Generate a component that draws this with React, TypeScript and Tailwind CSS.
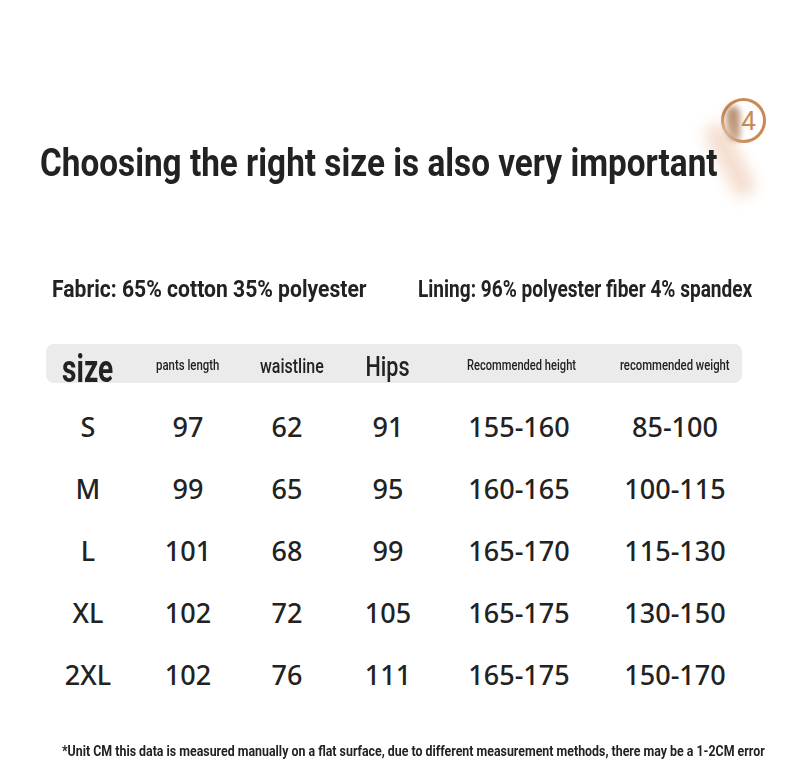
import { useLayoutEffect, useRef, useState } from 'react';

const roboto = { fontFamily: 'Roboto, "Liberation Sans", sans-serif' };

// squeezes a line of Roboto into the width it takes in the picture (the original uses a condensed face)
function Fit({ w, className = '', origin = 'left', children }: { w: number; className?: string; origin?: string; children: React.ReactNode }) {
  const ref = useRef<HTMLSpanElement>(null);
  const [s, setS] = useState(1);
  useLayoutEffect(() => {
    const measure = () => {
      if (ref.current) setS(w / ref.current.offsetWidth);
    };
    measure();
    document.fonts?.ready.then(measure);
  }, [w]);
  return (
    <span
      ref={ref}
      className={`inline-block whitespace-nowrap ${className}`}
      style={{ ...roboto, transform: `scaleX(${s})`, transformOrigin: origin }}
    >
      {children}
    </span>
  );
}

const rows = [
  ['S', '97', '62', '91', '155-160', '85-100'],
  ['M', '99', '65', '95', '160-165', '100-115'],
  ['L', '101', '68', '99', '165-170', '115-130'],
  ['XL', '102', '72', '105', '165-175', '130-150'],
  ['2XL', '102', '76', '111', '165-175', '150-170'],
];

const cols = 'grid grid-cols-[84px_116px_82px_120px_142px_170px]';

export default function App() {
  return (
    <div className="w-[790px] h-[775px] bg-white text-[#222] relative overflow-hidden">
      {/* page number badge with the blurred hand over it */}
      <div className="absolute left-[721px] top-[98px] w-[45px] h-[45px] rounded-full border-[3px] border-[#c98a55] flex items-center justify-center">
        <span className="text-[#c98a55] text-[26px] leading-none pl-[10px]" style={roboto}>4</span>
      </div>
      <div className="absolute left-[726px] top-[106px] w-[14px] h-[36px] rounded-full bg-[#a0663e] blur-[3px] opacity-70" />
      <div className="absolute left-[718px] top-[120px] w-[24px] h-[80px] rotate-[-28deg] rounded-full bg-[#f3dccb] blur-[7px] opacity-90" />

      <div className="pt-[140px] pl-[40px] h-[186px]">
        <Fit w={678} className="text-[39px] leading-[46px] font-bold">
          Choosing the right size is also very important
        </Fit>
      </div>

      <div className="flex mt-[89px] pl-[52px] h-[30px] items-center">
        <div className="w-[366px] shrink-0">
          <Fit w={315} className="text-[23px] leading-[30px] font-bold">Fabric: 65% cotton 35% polyester</Fit>
        </div>
        <div className="shrink-0">
          <Fit w={334} className="text-[23px] leading-[30px] font-bold">Lining: 96% polyester fiber 4% spandex</Fit>
        </div>
      </div>

      <div className={`${cols} items-center ml-[46px] mt-[39px] w-[696px] h-[39px] rounded-[8px] bg-[#ebebeb] font-bold`}>
        <div className="text-center translate-y-[5px]">
          <Fit w={51} origin="center" className="text-[38px] leading-none">size</Fit>
        </div>
        <div className="text-center">
          <Fit w={63} origin="center" className="text-[15px] leading-none font-medium">pants length</Fit>
        </div>
        <div className="text-center translate-y-[3px] pl-[6px]">
          <Fit w={64} origin="center" className="text-[20px] leading-none font-medium">waistline</Fit>
        </div>
        <div className="text-center translate-y-[4px]">
          <Fit w={44} origin="center" className="text-[28px] leading-none font-medium">Hips</Fit>
        </div>
        <div className="text-center">
          <Fit w={109} origin="center" className="text-[15px] leading-none font-medium">Recommended height</Fit>
        </div>
        <div className="text-center">
          <Fit w={110} origin="center" className="text-[15px] leading-none font-medium">recommended weight</Fit>
        </div>
      </div>

      <div className="ml-[46px] mt-[13px]" style={{ fontFamily: '"Noto Sans", "Open Sans", sans-serif' }}>
        {rows.map((r) => (
          <div key={r[0]} className={`${cols} items-center h-[62px] text-[27px] leading-[62px] font-medium`}>
            {r.map((c, i) => (
              <span key={i} className="text-center">{c}</span>
            ))}
          </div>
        ))}
      </div>

      <div className="mt-[32px] pl-[62px] h-[20px]">
        <Fit w={703} className="text-[15px] leading-[20px] font-bold">
          *Unit CM this data is measured manually on a flat surface, due to different measurement methods, there may be a 1-2CM error
        </Fit>
      </div>
    </div>
  );
}
